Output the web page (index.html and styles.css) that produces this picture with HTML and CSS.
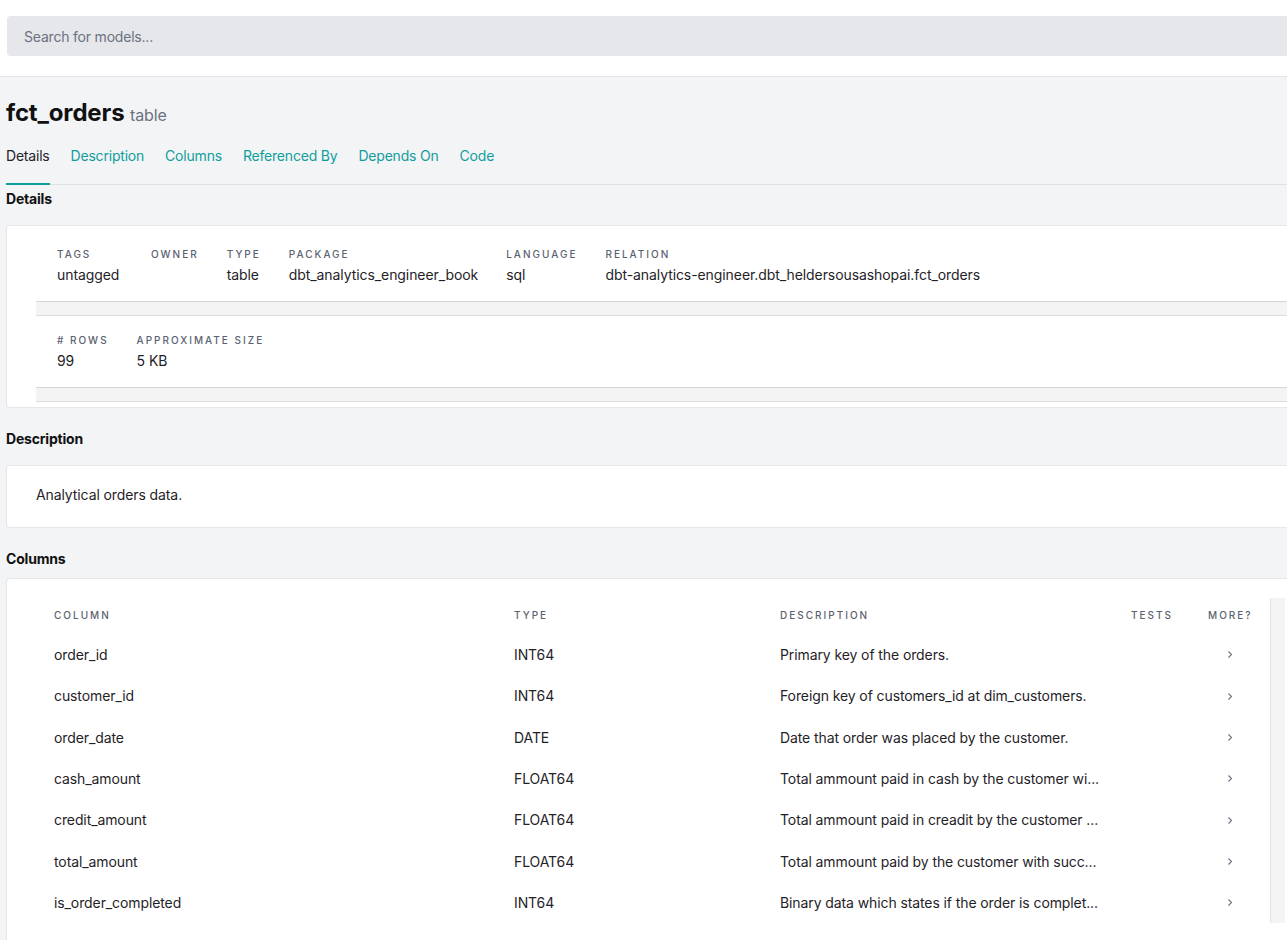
FILE: index.html
```html
<!DOCTYPE html>
<html lang="en">
<head>
<meta charset="utf-8">
<title>fct_orders</title>
<link rel="stylesheet" href="styles.css">
</head>
<body>
<header class="topbar">
  <div class="search">Search for models...</div>
</header>
<main class="main">
  <h1 class="title">fct_orders <small>table</small></h1>
  <nav class="tabs">
    <span class="tab active">Details</span>
    <span class="tab">Description</span>
    <span class="tab">Columns</span>
    <span class="tab">Referenced By</span>
    <span class="tab">Depends On</span>
    <span class="tab">Code</span>
  </nav>

  <h2 class="section-title first">Details</h2>
  <section class="card details-card">
    <div class="detail-row">
      <dl class="item w-tags"><dt>Tags</dt><dd>untagged</dd></dl>
      <dl class="item"><dt>Owner</dt><dd>&nbsp;</dd></dl>
      <dl class="item"><dt>Type</dt><dd>table</dd></dl>
      <dl class="item"><dt>Package</dt><dd>dbt_analytics_engineer_book</dd></dl>
      <dl class="item"><dt>Language</dt><dd>sql</dd></dl>
      <dl class="item"><dt>Relation</dt><dd>dbt-analytics-engineer.dbt_heldersousashopai.fct_orders</dd></dl>
    </div>
    <div class="htrack"></div>
    <div class="detail-row">
      <dl class="item"><dt># Rows</dt><dd>99</dd></dl>
      <dl class="item"><dt>Approximate Size</dt><dd>5 KB</dd></dl>
    </div>
    <div class="htrack"></div>
  </section>

  <h2 class="section-title">Description</h2>
  <section class="card desc-card">
    <p class="desc">Analytical orders data.</p>
  </section>

  <h2 class="section-title cols-title">Columns</h2>
  <section class="card cols-card">
    <div class="scroll">
      <div class="table">
        <div class="row head">
          <div>Column</div><div>Type</div><div>Description</div><div>Tests</div><div>More?</div>
        </div>
        <div class="row">
          <div>order_id</div><div>INT64</div><div>Primary key of the orders.</div><div></div>
          <div class="more"><svg width="6" height="9" viewBox="0 0 6 9"><polyline points="1.5,1.5 4.5,4.5 1.5,7.5" fill="none" stroke="#6b7280" stroke-width="1.1"/></svg></div>
        </div>
        <div class="row">
          <div>customer_id</div><div>INT64</div><div>Foreign key of customers_id at dim_customers.</div><div></div>
          <div class="more"><svg width="6" height="9" viewBox="0 0 6 9"><polyline points="1.5,1.5 4.5,4.5 1.5,7.5" fill="none" stroke="#6b7280" stroke-width="1.1"/></svg></div>
        </div>
        <div class="row">
          <div>order_date</div><div>DATE</div><div>Date that order was placed by the customer.</div><div></div>
          <div class="more"><svg width="6" height="9" viewBox="0 0 6 9"><polyline points="1.5,1.5 4.5,4.5 1.5,7.5" fill="none" stroke="#6b7280" stroke-width="1.1"/></svg></div>
        </div>
        <div class="row">
          <div>cash_amount</div><div>FLOAT64</div><div>Total ammount paid in cash by the customer wi...</div><div></div>
          <div class="more"><svg width="6" height="9" viewBox="0 0 6 9"><polyline points="1.5,1.5 4.5,4.5 1.5,7.5" fill="none" stroke="#6b7280" stroke-width="1.1"/></svg></div>
        </div>
        <div class="row">
          <div>credit_amount</div><div>FLOAT64</div><div>Total ammount paid in creadit by the customer ...</div><div></div>
          <div class="more"><svg width="6" height="9" viewBox="0 0 6 9"><polyline points="1.5,1.5 4.5,4.5 1.5,7.5" fill="none" stroke="#6b7280" stroke-width="1.1"/></svg></div>
        </div>
        <div class="row">
          <div>total_amount</div><div>FLOAT64</div><div>Total ammount paid by the customer with succ...</div><div></div>
          <div class="more"><svg width="6" height="9" viewBox="0 0 6 9"><polyline points="1.5,1.5 4.5,4.5 1.5,7.5" fill="none" stroke="#6b7280" stroke-width="1.1"/></svg></div>
        </div>
        <div class="row">
          <div>is_order_completed</div><div>INT64</div><div>Binary data which states if the order is complet...</div><div></div>
          <div class="more"><svg width="6" height="9" viewBox="0 0 6 9"><polyline points="1.5,1.5 4.5,4.5 1.5,7.5" fill="none" stroke="#6b7280" stroke-width="1.1"/></svg></div>
        </div>
      </div>
      <div class="vtrack"></div>
    </div>
  </section>
</main>
</body>
</html>
```
FILE: styles.css
```css
html, body {
  overflow: hidden;
}
body {
  margin: 0;
  font-family: Inter, "Noto Sans", "Liberation Sans", sans-serif;
  background: #f3f4f6;
  color: #1f2328;
  letter-spacing: -0.2px;
}
.topbar {
  background: #fff;
  padding: 16px 0 20px 7px;
  border-bottom: 1px solid #e2e4e8;
}
.search {
  height: 40px;
  margin-right: -10px;
  background: #e5e7eb;
  border-radius: 4px 0 0 4px;
  padding: 1px 0 0 17px;
  box-sizing: border-box;
  display: flex;
  align-items: center;
  font-size: 14px;
  color: #6b7280;
}
.main {
  padding: 20px 0 0 6px;
}
.title {
  margin: 0;
  font-size: 24px;
  line-height: 32px;
  font-weight: 700;
  color: #111;
  letter-spacing: -0.15px;
}
.title small {
  font-size: 16px;
  font-weight: 400;
  color: #6b7280;
  letter-spacing: -0.1px;
}
.tabs {
  display: flex;
  gap: 21px;
  margin-top: 15px;
  border-bottom: 1px solid #dfe1e5;
}
.tab {
  font-size: 14px;
  line-height: 20px;
  padding-bottom: 17px;
  color: #109e9c;
}
.tab.active {
  color: #1f2328;
  border-bottom: 2px solid #109e9c;
  margin-bottom: -1px;
}
.section-title {
  margin: 21px 0 16px;
  font-size: 14px;
  line-height: 20px;
  font-weight: 700;
  color: #111;
}
.section-title.first {
  margin-top: 4px;
}
.section-title.cols-title {
  margin-bottom: 9px;
}
.card {
  background: #fff;
  border: 1px solid #e5e7eb;
  border-right: none;
  border-radius: 4px 0 0 4px;
  margin-right: -30px;
}
.details-card {
  padding: 4px 0 5px 29px;
}
.detail-row {
  display: flex;
  gap: 28px;
  padding: 16px 0 16px 21px;
}
.item {
  margin: 0;
}
.item dt {
  font-size: 10px;
  line-height: 16px;
  letter-spacing: 2px;
  text-transform: uppercase;
  color: #5b6270;
  font-weight: 500;
}
.item dd {
  margin: 3px 0 0;
  font-size: 14px;
  line-height: 20px;
  color: #1f2328;
  letter-spacing: -0.08px;
}
.w-tags {
  min-width: 66px;
}
.htrack {
  height: 13px;
  background: #f4f4f4;
  border-top: 1px solid #d6d6d6;
  border-bottom: 1px solid #dcdcdc;
}
.desc-card {
  padding: 19px 30px 22px 29px;
}
.desc {
  margin: 0;
  font-size: 14px;
  line-height: 20px;
  color: #1f2328;
  letter-spacing: -0.1px;
}
.cols-card {
  padding: 19px 32px 60px 29px;
}
.scroll {
  display: flex;
  height: 325px;
}
.table {
  flex: 1;
  padding-top: 9px;
}
.row {
  display: grid;
  grid-template-columns: 460px 266px 351px 77px 1fr;
  font-size: 14px;
  line-height: 20px;
  padding: 10.66px 0;
  color: #1f2328;
  letter-spacing: -0.1px;
}
.row > div {
  padding-left: 18px;
  white-space: nowrap;
  overflow: hidden;
}
.row.head {
  padding: 0 0 11.33px;
  font-size: 10px;
  line-height: 16px;
  letter-spacing: 2px;
  text-transform: uppercase;
  color: #5b6270;
  font-weight: 500;
}
.more {
  display: flex;
  align-items: center;
}
.more svg {
  margin-left: 19px;
}
.vtrack {
  width: 14px;
  background: #f4f4f4;
  border-left: 1px solid #e2e2e2;
}
```
